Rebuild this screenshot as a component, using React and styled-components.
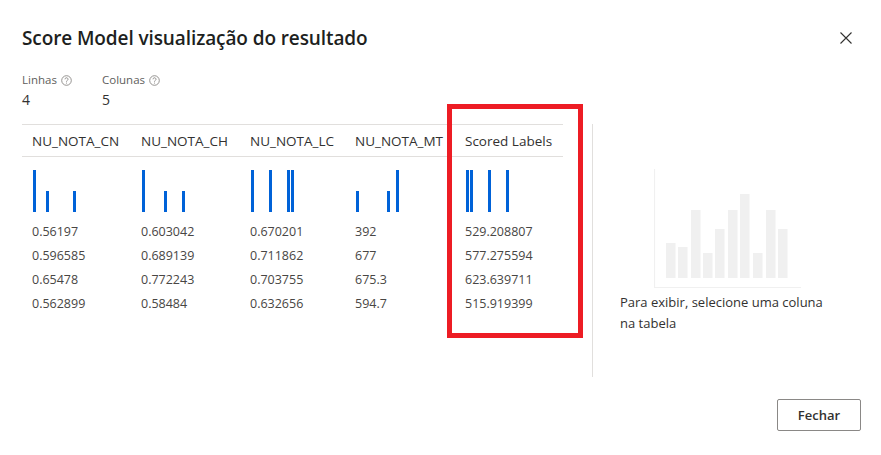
import React from "react";
import styled, { createGlobalStyle } from "styled-components";

const GlobalStyle = createGlobalStyle`
  html, body {
    margin: 0;
    padding: 0;
    background: #ffffff;
  }
  body {
    font-family: "Open Sans", "Noto Sans", sans-serif;
    color: #323130;
  }
`;

const columns = [
  { name: "NU_NOTA_CN", width: 109, bars: [[1, 42], [14, 21], [41, 21]], values: ["0.56197", "0.596585", "0.65478", "0.562899"] },
  { name: "NU_NOTA_CH", width: 109, bars: [[1, 42], [23, 21], [41, 21]], values: ["0.603042", "0.689139", "0.772243", "0.58484"] },
  { name: "NU_NOTA_LC", width: 105, bars: [[1, 42], [19, 42], [37, 42], [41, 42]], values: ["0.670201", "0.711862", "0.703755", "0.632656"] },
  { name: "NU_NOTA_MT", width: 110, bars: [[1, 21], [32, 21], [41, 42]], values: ["392", "677", "675.3", "594.7"] },
  { name: "Scored Labels", width: 108, bars: [[1, 42], [5, 42], [23, 42], [41, 42]], values: ["529.208807", "577.275594", "623.639711", "515.919399"] },
];

const placeholderBars = [
  [12, 74], [24, 78], [37, 41], [49, 84], [61, 60], [74, 41], [86, 25], [99, 84], [112, 41], [124, 60],
];

function HelpIcon() {
  return (
    <svg width="11" height="11" viewBox="0 0 11 11">
      <circle cx="5.5" cy="5.5" r="4.8" fill="none" stroke="#8a8886" strokeWidth="0.9" />
      <path d="M4 4.3a1.5 1.5 0 1 1 2.2 1.3c-.5.3-.7.5-.7 1.1" fill="none" stroke="#8a8886" strokeWidth="0.9" />
      <circle cx="5.5" cy="8" r="0.55" fill="#8a8886" />
    </svg>
  );
}

function CloseIcon() {
  return (
    <svg width="12" height="12" viewBox="0 0 12 12">
      <path d="M0.5 0.5L11.5 11.5M11.5 0.5L0.5 11.5" stroke="#323130" strokeWidth="1.1" />
    </svg>
  );
}

function Spark({ bars }) {
  return (
    <svg width="46" height="43" viewBox="0 0 46 43">
      {bars.map(([x, h], i) => (
        <rect key={i} x={x} y={43 - h} width="3" height={h} fill="#0062d8" />
      ))}
    </svg>
  );
}

function PlaceholderChart() {
  return (
    <svg width="147" height="120" viewBox="0 0 147 120">
      {placeholderBars.map(([x, top], i) => (
        <rect key={i} x={x} y={top} width="9.5" height={109 - top} fill="#f0f0f0" />
      ))}
      <path d="M0.5 0V118.5H147" fill="none" stroke="#f0f0f0" strokeWidth="1.2" />
    </svg>
  );
}

export default function App() {
  return (
    <>
      <GlobalStyle />
      <Dialog>
        <Header>
          <Title>Score Model visualização do resultado</Title>
          <CloseButton aria-label="Fechar">
            <CloseIcon />
          </CloseButton>
        </Header>

        <Stats>
          <Stat>
            <StatLabel>
              Linhas <HelpIcon />
            </StatLabel>
            <StatValue>4</StatValue>
          </Stat>
          <Stat>
            <StatLabel>
              Colunas <HelpIcon />
            </StatLabel>
            <StatValue>5</StatValue>
          </Stat>
        </Stats>

        <Body>
          <TableArea>
            <Table>
              {columns.map((col) => (
                <Column key={col.name} $width={col.width}>
                  <HeadCell>{col.name}</HeadCell>
                  <SparkCell>
                    <Spark bars={col.bars} />
                  </SparkCell>
                  {col.values.map((v, i) => (
                    <Cell key={i}>{v}</Cell>
                  ))}
                </Column>
              ))}
            </Table>
            <Highlight />
          </TableArea>

          <Divider />

          <SidePanel>
            <ChartWrap>
              <PlaceholderChart />
            </ChartWrap>
            <Hint>Para exibir, selecione uma coluna na tabela</Hint>
          </SidePanel>
        </Body>

        <Footer>
          <SecondaryButton>Fechar</SecondaryButton>
        </Footer>
      </Dialog>
    </>
  );
}

const Dialog = styled.div`
  width: 881px;
  height: 455px;
  box-sizing: border-box;
  padding: 0 20px 0 22px;
  display: flex;
  flex-direction: column;
`;

const Header = styled.div`
  display: flex;
  justify-content: space-between;
  align-items: center;
  height: 42px;
  margin-top: 17px;
`;

const Title = styled.h1`
  margin: 0;
  font-size: 19px;
  font-weight: 600;
  color: #201f1e;
  letter-spacing: -0.1px;
`;

const CloseButton = styled.button`
  border: none;
  background: none;
  padding: 0;
  margin-right: 9px;
  width: 12px;
  height: 12px;
  display: flex;
`;

const Stats = styled.div`
  display: flex;
  gap: 22px;
  margin-top: 13px;
`;

const Stat = styled.div`
  display: flex;
  flex-direction: column;
  min-width: 58px;
`;

const StatLabel = styled.div`
  display: flex;
  align-items: center;
  gap: 4px;
  font-size: 11.5px;
  color: #605e5c;
  line-height: 16px;
`;

const StatValue = styled.div`
  font-size: 14px;
  line-height: 20px;
  margin-top: 2px;
  color: #323130;
`;

const Body = styled.div`
  display: flex;
  margin-top: 14px;
  height: 253px;
`;

const TableArea = styled.div`
  position: relative;
  width: 541px;
`;

const Table = styled.div`
  display: flex;
  border-top: 1px solid #e1dfdd;
`;

const Column = styled.div`
  width: ${(p) => p.$width}px;
  display: flex;
  flex-direction: column;
`;

const HeadCell = styled.div`
  height: 32px;
  box-sizing: border-box;
  padding: 0 0 0 10px;
  display: flex;
  align-items: center;
  font-size: 13.5px;
  color: #323130;
  white-space: nowrap;
  border-bottom: 1px solid #e1dfdd;
`;

const SparkCell = styled.div`
  padding: 12px 0 0 10px;
  height: 51px;
`;

const Cell = styled.div`
  padding-left: 10px;
  height: 24px;
  line-height: 24px;
  font-size: 12.5px;
  color: #484644;
`;

const Highlight = styled.div`
  position: absolute;
  left: 425px;
  top: -20px;
  width: 136px;
  height: 234px;
  box-sizing: border-box;
  border: 5px solid #ed1c24;
  pointer-events: none;
`;

const Divider = styled.div`
  width: 1px;
  background: #e1dfdd;
  margin-left: 29px;
`;

const SidePanel = styled.div`
  display: flex;
  flex-direction: column;
  padding-left: 27px;
  padding-top: 45px;
`;

const ChartWrap = styled.div`
  padding-left: 34px;
`;

const Hint = styled.div`
  width: 208px;
  margin-top: -2px;
  font-size: 13px;
  line-height: 21px;
  color: #323130;
`;

const Footer = styled.div`
  display: flex;
  justify-content: flex-end;
  margin-top: 22px;
`;

const SecondaryButton = styled.button`
  width: 84px;
  height: 32px;
  border: 1px solid #8a8886;
  border-radius: 2px;
  background: #ffffff;
  font-family: "Open Sans", sans-serif;
  font-size: 13px;
  font-weight: 600;
  color: #323130;
`;
